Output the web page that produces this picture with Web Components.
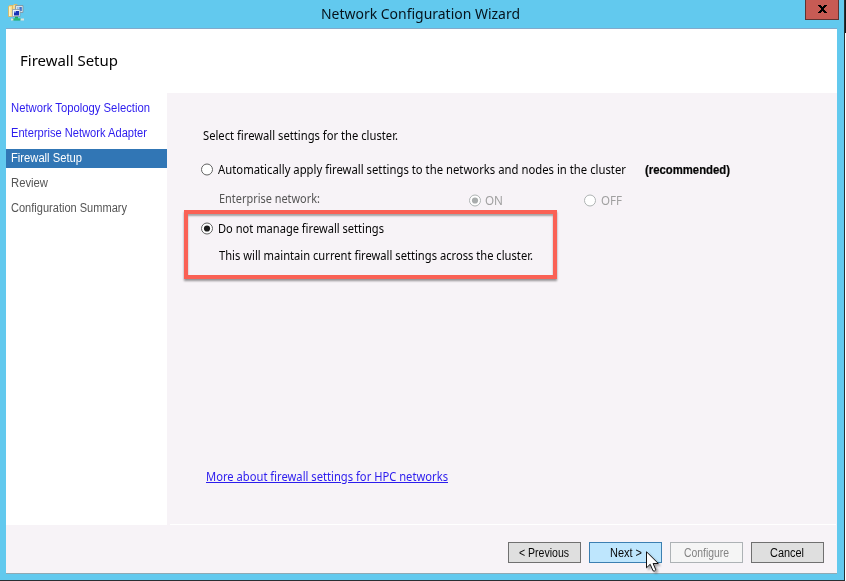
<!DOCTYPE html>
<html lang="en"><head><meta charset="utf-8"><title>Network Configuration Wizard</title>
<style>html,body{margin:0;width:846px;height:581px;overflow:hidden;background:#fff}</style></head>
<body>
<wizard-window></wizard-window>
<script>
const define=(name,html,init)=>customElements.define(name,class extends HTMLElement{
  connectedCallback(){
    if(this.shadowRoot)return;
    this.attachShadow({mode:'open'});
    const t=document.createElement('template');t.innerHTML=html;
    this.shadowRoot.append(t.content.cloneNode(true));
    if(init)init.call(this,this.shadowRoot);
  }
});

// One line of text condensed horizontally to the width given in "w"
define('fit-text',`<style>
:host{display:block;flex:none;white-space:nowrap;line-height:16px;height:16px}
span{display:inline-block;transform-origin:0 0;text-decoration:inherit}
</style><span><slot></slot></span>`,function(r){
  const w=+this.getAttribute('w'),s=r.querySelector('span');
  this.style.width=w+'px';
  s.style.transform='scaleX('+w/s.getBoundingClientRect().width+')';
});

define('network-icon',`<style>:host{display:block;width:18px;height:18px}svg{display:block}</style>
<svg width="18" height="18" viewBox="0 0 18 18">
<path d="M1.500 3.500l1-1h3.500l1-1h3v12h-8.500z" fill="#f5dc94" stroke="#dcb45c" stroke-width=".8"/><path d="M2 4h1.500v9H2z" fill="#fff3bd"/><path d="M5 3h1v7H5z" fill="#e2b95f"/>
<path d="M8.500 2.500h7.500v7H8.500z" fill="#dbe4ea" stroke="#7d96a6" stroke-width=".9"/><path d="M10.500 4h4.300v4h-4.300z" fill="#3f6fc9"/><path d="M10.500 4h2v2h-2z" fill="#a8d3f4"/>
<path d="M5.500 6.500h7.500v7H5.500z" fill="#edf2f6" stroke="#8d9ba8" stroke-width=".8"/><path d="M7 8h5v4.500H7z" fill="#1832b4"/><path d="M7 8h2v1.500H7z" fill="#8ca8f0"/>
<path d="M8 13.800h3v1.700h2.500v2h-8v-2H8z" fill="#15a765"/><path d="M4 15.500h2.500v2H4zM13.500 15.500h3.500v2h-3.500z" fill="#dbe4dd"/><path d="M6.500 16h7" stroke="#3ecb80"/>
</svg>`);

define('title-bar',`<style>
:host{display:grid;grid-template-columns:321px 1fr 39px;height:28px;font-family:"Noto Sans","Open Sans",sans-serif;font-size:15px;color:#06131c}
network-icon{margin:3px 0 0 7px}
fit-text{margin-top:3px;line-height:20px;height:20px}
.x{box-sizing:border-box;width:34px;height:20px;background:#c75b54;border:1px solid #5e3432;border-top:0;display:flex;justify-content:center}
.x svg{display:block;margin-top:5px}
</style><network-icon></network-icon><fit-text w="199"><slot></slot></fit-text>
<div class="x"><svg width="9" height="8" viewBox="0 0 9 8"><path d="M0 0h3v1h1v1h1V1h1V0h3v1H8v1H7v1H6v2h1v1h1v1h1v1H6V7H5V6H4v1H3v1H0V7h1V6h1V5h1V3H2V2H1V1H0z" fill="#000"/></svg></div>`);

define('step-item',`<style>
:host{display:flex;height:19px;margin-bottom:6px;padding-left:5px;color:#555;font:12px "Liberation Sans",Arial,sans-serif}
:host([done]){color:#2c1cee}
:host([current]){background:#3176b5;color:#fff}
fit-text{margin-top:1px}
</style>`,function(r){
  const n=document.createElement('fit-text');
  n.setAttribute('w',this.getAttribute('w'));n.append(document.createElement('slot'));r.append(n);
});

define('radio-option',`<style>
:host{display:flex;height:16px;align-items:center;color:#050505;gap:5px}
:host([disabled]){color:#a0a0a0}
svg{flex:none;display:block;margin-top:-2px}
circle.o{fill:#fff;stroke:#626262}
circle.d{fill:#1c1c1c;display:none}
:host([checked]) .d{display:block}
:host([disabled]) .o{stroke:#aeb3b3}
:host([disabled]) .d{fill:#a9adad}
</style><svg width="12" height="13" viewBox="0 0 12 13"><circle class="o" cx="6" cy="6.500" r="5.500"/><circle class="d" cx="6" cy="6.500" r="3.100"/></svg><slot></slot>`);

define('push-button',`<style>
:host{box-sizing:border-box;width:73px;height:21px;border:1px solid #707070;background:#dfdfdf;color:#080808;display:flex;justify-content:center;font:12px "Liberation Sans",Arial,sans-serif}
:host([hot]){background:#bee6fd;border-color:#3c7fb1}
:host([disabled]){background:#f5f5f5;border-color:#adb2b5;color:#838383}
::slotted(fit-text){margin:2px 0 0 0}
</style><slot></slot>`);

// Frame that marks the chosen option
define('highlight-box',`<style>
:host{box-sizing:border-box;display:block;border:4px solid #fa6155;box-shadow:0 2px 2px #0006,inset 0 2px 2px #0005}
</style><slot></slot>`);

define('mouse-pointer',`<style>:host{display:block;filter:drop-shadow(2px 2px 1px #0005)}svg{display:block}</style>
<svg width="14" height="22" viewBox="0 0 14 22"><path d="M.5 .8v16l3.700-3.500 2.800 6.500q1.500 1 2.800-1l-2.700-6.300h5.200z" fill="#fff" stroke="#111"/></svg>`);

define('wizard-window',`<style>
:host{display:block;box-sizing:border-box;position:relative;width:845px;height:581px;background:#62c9ee;border-right:1px solid #292f33;border-bottom:1px solid #292f33;font:12px "Noto Sans","Open Sans",sans-serif;color:#050505}
.client{box-sizing:border-box;width:831px;height:546px;margin-left:6px;border-top:1px solid #82a9cb;border-bottom:1px solid #8fa9b4;background:#f7f3f7;display:grid;grid-template:64px 432px 1fr/161px 1fr}
header{grid-column:1/3;background:#fff;padding:20px 14px;box-sizing:border-box;font-size:15px}
header fit-text{line-height:22px;height:22px}
nav{background:#fff;padding-top:6px;box-sizing:border-box}
main{display:flex;flex-direction:column;padding-left:33px;border-bottom:1px solid #fff;box-sizing:border-box;margin:0 1px 0 3px;height:432px}
.intro{margin-top:35px}
.auto{display:flex;margin:18px 0 0 -2px;gap:19px}
.rec{font:bold 12px "Liberation Sans",Arial,sans-serif}
.rec fit-text{-webkit-text-stroke:.2px}
.net{display:flex;height:18px;margin:13px 0 0 16px;color:#555}
.net radio-option{margin-top:2px}
.net .on{margin-left:149px;gap:4px}.off{margin-left:81px}
highlight-box{width:373px;height:69px;margin:1px 0 0 -19px;padding:7px 0 0 13px}
highlight-box>fit-text{margin:11px 0 0 18px}
.more{color:#2c1cee;text-decoration:underline;margin:190px 0 0 3px}
footer{grid-column:1/3;display:flex;justify-content:flex-end;padding:17px 13px 0;gap:8px}
footer push-button:not([hot]) fit-text{margin-right:1px}
mouse-pointer{position:absolute;left:646px;top:551px}
.edge{position:absolute;left:845px;top:0;width:1px;height:33px;background:#17191b}
</style>
<title-bar>Network Configuration Wizard</title-bar>
<div class="client">
<header><fit-text w="98">Firewall Setup</fit-text></header>
<nav>
<step-item done w="139">Network Topology Selection</step-item>
<step-item done w="136">Enterprise Network Adapter</step-item>
<step-item current w="71">Firewall Setup</step-item>
<step-item w="37">Review</step-item>
<step-item w="116">Configuration Summary</step-item>
</nav>
<main>
<fit-text class="intro" w="195">Select firewall settings for the cluster.</fit-text>
<div class="auto"><radio-option><fit-text w="408">Automatically apply firewall settings to the networks and nodes in the cluster</fit-text></radio-option><div class="rec"><fit-text w="85">(recommended)</fit-text></div></div>
<div class="net"><fit-text w="101">Enterprise network:</fit-text>
<radio-option class="on" checked disabled><fit-text w="18">ON</fit-text></radio-option>
<radio-option class="off" disabled><fit-text w="21">OFF</fit-text></radio-option></div>
<highlight-box><radio-option checked><fit-text w="166">Do not manage firewall settings</fit-text></radio-option>
<fit-text w="314">This will maintain current firewall settings across the cluster.</fit-text></highlight-box>
<fit-text class="more" w="242">More about firewall settings for HPC networks</fit-text>
</main>
<footer>
<push-button><fit-text w="50">&lt; Previous</fit-text></push-button>
<push-button hot><fit-text w="32">Next &gt;</fit-text></push-button>
<push-button disabled><fit-text w="45">Configure</fit-text></push-button>
<push-button><fit-text w="34">Cancel</fit-text></push-button>
</footer>
</div>
<mouse-pointer></mouse-pointer><div class="edge"></div>`);
</script>
</body></html>
